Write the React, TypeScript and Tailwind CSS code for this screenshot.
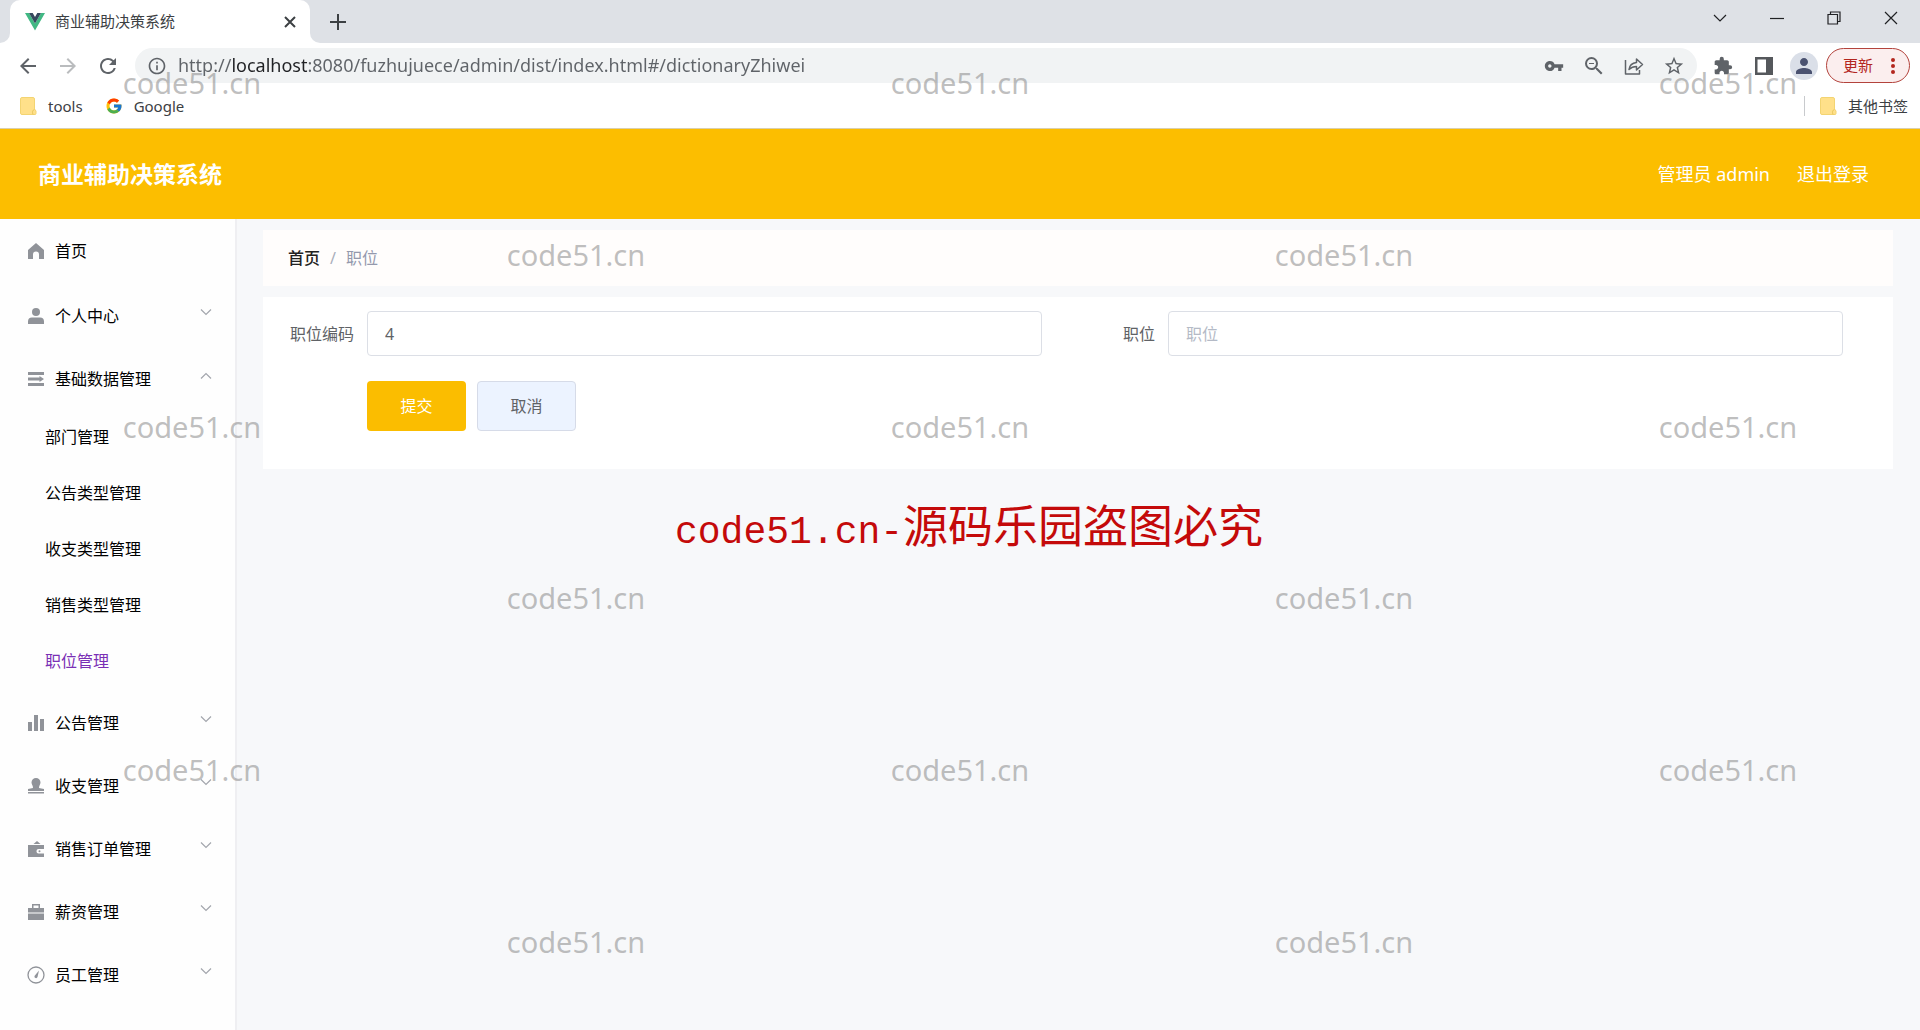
import type { ReactNode } from "react";
import {
  MdArrowBack,
  MdArrowForward,
  MdExtension,
  MdInfoOutline,
  MdPerson,
  MdRefresh,
  MdStarBorder,
  MdVpnKey,
  MdZoomOut,
} from "react-icons/md";
import { FcGoogle } from "react-icons/fc";

/* ---------- drawings ---------- */

function VueLogo() {
  return (
    <svg viewBox="0 0 20 18" className="h-[18px] w-5" aria-hidden="true">
      <path d="M0 0h4l6 10.5L16 0h4L10 17.5z" fill="#41b883" />
      <path d="M4 0h3.7L10 4l2.3-4H16L10 10.5z" fill="#35495e" />
    </svg>
  );
}

function Folder() {
  return (
    <svg viewBox="0 0 17 18" className="h-[18px] w-[17px]" aria-hidden="true">
      <path d="M2 .5h11a1.5 1.5 0 0 1 1.5 1.5v10l1.5 2v2.500a1 1 0 0 1-1 1H2A1.500 1.500 0 0 1 .5 16V2A1.500 1.500 0 0 1 2 .5z" fill="#ffe08a" stroke="#f3d472" />
      <path d="M14.500 12.500c-2 .5-2.500 2.500-1.500 5" fill="none" stroke="#e9c65c" />
    </svg>
  );
}

function ShareIcon() {
  return (
    <svg viewBox="0 0 20 20" className="size-5" fill="none" stroke="#5f6368" strokeWidth="1.500" strokeLinejoin="round" aria-hidden="true">
      <path d="M1.500 4v14h14v-4" />
      <path d="M5 13.500C5.500 9.500 8 7 12.500 6.500V3l6 5.500-6 5.500v-3.500c-3.500 0-5.500 1-7.500 3z" />
    </svg>
  );
}

function SidePanelIcon() {
  return (
    <svg viewBox="0 0 18 18" className="size-[18px]" aria-hidden="true">
      <path fill="#55585c" fillRule="evenodd" d="M0 0h18v18H0zM2.500 2.500v13H11v-13z" />
    </svg>
  );
}

function Chevron({ up = false }: { up?: boolean }) {
  return (
    <svg viewBox="0 0 14 14" className="size-3.5" fill="none" stroke="#a3a6ad" strokeWidth="1.200" aria-hidden="true">
      <path d={up ? "M2 10.500 7 5.500l5 5" : "M2 4.500l5 5 5-5"} />
    </svg>
  );
}

const icons: Record<string, ReactNode> = {
  home: <path d="M9 1 17 8v9h-5v-4.500a2.500 2.500 0 0 0-6 0V17H1V8z" />,
  user: (
    <>
      <circle cx="9" cy="5" r="4" />
      <path d="M1 17v-2.500a4 4 0 0 1 4-4h8a4 4 0 0 1 4 4V17z" />
    </>
  ),
  unfold: <path d="M1 2h16v3H1zM1 13h16v3H1zM1 7.500h11.500V6l4.500 3-4.500 3v-1.500H1z" />,
  data: <path d="M1 8h4v9H1zM7 1h4v16H7zM13 5h4v12h-4z" />,
  check: (
    <>
      <path d="M9 1a4.500 4.500 0 0 1 4.500 4.500c0 2-1.500 3-1.500 5.500l5 1v2H1v-2l5-1c0-2.500-1.500-3.500-1.500-5.500A4.500 4.500 0 0 1 9 1z" />
      <path d="M1 15h16v1.500H1z" />
    </>
  ),
  wallet: (
    <>
      <path d="M6.500 4 10 1l3.500 3z" />
      <path fillRule="evenodd" d="M1 5h16v4h-5.500a2 2 0 0 0-2 2v.5a2 2 0 0 0 2 2H17V17H1z" />
      <circle cx="12.500" cy="11.250" r="1" />
    </>
  ),
  briefcase: (
    <path fillRule="evenodd" d="M5 1h8v4h4v4.500H1V5h4zM6.500 2.500V5h5V2.500zM1 10.500h16V17H1z" />
  ),
  odometer: (
    <>
      <circle cx="9" cy="9" r="8" fill="none" stroke="currentColor" strokeWidth="1.300" />
      <path d="M12 4.500 10.500 11a1.500 1.500 0 1 1-3-1z" />
    </>
  ),
};

function MenuIcon({ name }: { name: string }) {
  return (
    <svg viewBox="0 0 18 18" className="size-[18px] shrink-0 text-[#909399]" fill="currentColor" aria-hidden="true">
      {icons[name]}
    </svg>
  );
}

/* ---------- browser window ---------- */

function BrowserChrome() {
  return (
    <div className="border-b border-[#d9cfae] bg-white text-[#3c4043]">
      <div className="flex h-[43px] items-end bg-[#dee1e6]">
        <div className="size-2.5 bg-white">
          <div className="size-2.5 rounded-br-[10px] bg-[#dee1e6]" />
        </div>
        <div className="flex h-[43px] w-[300px] items-center rounded-t-[10px] bg-white pr-2.5 pl-[15px]">
          <VueLogo />
          <span className="ml-[10px] grow text-[15px]">商业辅助决策系统</span>
          <button aria-label="关闭标签页" className="flex size-5 items-center justify-center">
            <svg viewBox="0 0 12 12" className="size-3" stroke="#3c4043" strokeWidth="2" aria-hidden="true">
              <path d="M1 1l10 10M11 1 1 11" />
            </svg>
          </button>
        </div>
        <div className="size-2.5 bg-white">
          <div className="size-2.5 rounded-bl-[10px] bg-[#dee1e6]" />
        </div>
        <button aria-label="新建标签页" className="ml-1.5 flex h-[43px] w-6 items-center justify-center">
          <svg viewBox="0 0 16 16" className="size-4" stroke="#3c4043" strokeWidth="2" aria-hidden="true">
            <path d="M8 0v16M0 8h16" />
          </svg>
        </button>
        <div className="ml-auto flex self-start pr-px text-[#202124]">
          {[
            ["搜索标签页", "M1 4l6 6 6-6"],
            ["最小化", "M0 7.500h14"],
            ["还原", "M1 3.500h9.500V13H1zM3.500 3V1h9.500v9.500h-2"],
            ["关闭", "M1 1l12 12M13 1 1 13"],
          ].map(([label, d]) => (
            <button key={label} aria-label={label} className="flex h-9 w-[57px] items-center justify-center">
              <svg viewBox="0 0 14 14" className="size-3.5" fill="none" stroke="currentColor" strokeWidth="1.200" aria-hidden="true">
                <path d={d} />
              </svg>
            </button>
          ))}
        </div>
      </div>

      <div className="flex h-[45px] items-center pr-2.5 pl-4 text-[#5f6368]">
        <button aria-label="后退" className="size-6"><MdArrowBack className="size-6" /></button>
        <button aria-label="前进" className="ml-4 size-6 text-[#babcbe]"><MdArrowForward className="size-6" /></button>
        <button aria-label="重新加载" className="ml-4 size-6"><MdRefresh className="size-6" /></button>
        <div className="ml-[15px] flex h-[35px] grow items-center rounded-full bg-[#f1f3f4] pr-[11px] pl-3">
          <MdInfoOutline className="size-5" />
          <input
            aria-label="地址栏"
            defaultValue="http://localhost:8080/fuzhujuece/admin/dist/index.html#/dictionaryZhiwei"
            className="ml-[11px] h-8 grow bg-[linear-gradient(90deg,#5f6368_0_54px,#202124_54px_129px,#5f6368_129px)] bg-clip-text pb-0.5 text-[18px] text-transparent outline-none"
          />
          <div className="flex gap-4">
            <button aria-label="密码" className="flex size-6 items-center justify-center"><MdVpnKey className="size-5" /></button>
            <button aria-label="缩放" className="size-6"><MdZoomOut className="size-6" /></button>
            <button aria-label="分享" className="flex size-6 items-center justify-center"><ShareIcon /></button>
            <button aria-label="添加书签" className="flex size-6 items-center justify-center"><MdStarBorder className="size-[22px]" /></button>
          </div>
        </div>
        <button aria-label="扩展程序" className="ml-4"><MdExtension className="size-5" /></button>
        <button aria-label="侧边栏" className="ml-[22px]"><SidePanelIcon /></button>
        <button aria-label="用户" className="ml-[17px] flex size-7 items-center justify-center rounded-full bg-[#dadfe8] text-[#4a5270]">
          <MdPerson className="size-6" />
        </button>
        <button className="ml-2 flex h-[35px] w-[84px] items-center justify-between rounded-full border border-[#b3433c] bg-[#fbeeee] pr-3.5 pl-4 text-[15px] text-[#b3261e]">
          更新
          <svg viewBox="0 0 4 18" className="h-[18px] w-1" fill="currentColor" aria-hidden="true">
            <circle cx="2" cy="3" r="2" />
            <circle cx="2" cy="9" r="2" />
            <circle cx="2" cy="15" r="2" />
          </svg>
        </button>
      </div>

      <div className="flex h-10 items-center pr-3 pb-3 pl-5 pt-2 text-[15px]">
        <a href="#tools" className="flex items-center gap-[11px]"><Folder />tools</a>
        <a href="#google" className="ml-[22px] flex items-center gap-[11px]"><FcGoogle className="size-[18px]" />Google</a>
        <a href="#other" className="ml-auto flex items-center gap-[11px]">
          <span className="mr-1 h-5 w-px bg-[#c8cacd]" />
          <Folder />
          其他书签
        </a>
      </div>
    </div>
  );
}

/* ---------- application ---------- */

const menu = [
  { label: "个人中心", icon: "user" },
  {
    label: "基础数据管理",
    icon: "unfold",
    children: ["部门管理", "公告类型管理", "收支类型管理", "销售类型管理", "职位管理"],
  },
  { label: "公告管理", icon: "data" },
  { label: "收支管理", icon: "check" },
  { label: "销售订单管理", icon: "wallet" },
  { label: "薪资管理", icon: "briefcase" },
  { label: "员工管理", icon: "odometer" },
];

function Sidebar() {
  return (
    <nav className="w-[237px] shrink-0 border-r-2 border-[#efeff2] bg-[#fefefe] pt-0.5 text-[16px] text-black">
      <a href="#home" className="mb-[5px] flex h-[60px] items-center gap-[10px] pl-[27px]">
        <MenuIcon name="home" />
        首页
      </a>
      {menu.map((item) => (
        <div key={item.label}>
          <button className="mb-[3px] flex h-[60px] w-full items-center gap-[10px] pr-[22px] pl-[27px] text-left has-[+ul]:mb-0">
            <MenuIcon name={item.icon} />
            <span className="grow">{item.label}</span>
            <span className="pb-2"><Chevron up={Boolean(item.children)} /></span>
          </button>
          {item.children && (
            <ul className="mb-1">
              {item.children.map((child) => (
                <li key={child}>
                  <a
                    href="#sub"
                    className={
                      child === "职位管理"
                        ? "flex h-14 items-center pl-[45px] text-[#7a2fb5]"
                        : "flex h-14 items-center pl-[45px]"
                    }
                  >
                    {child}
                  </a>
                </li>
              ))}
            </ul>
          )}
        </div>
      ))}
    </nav>
  );
}

const inputClass =
  "h-[45px] w-0 grow rounded border border-[#dcdfe6] bg-white px-[17px] text-[16px] text-[#606266] outline-none placeholder:text-[#b4bac6]";

function Content() {
  return (
    <main className="grow bg-[#f7f8fa] pt-[11px] pr-[27px] pl-[26px]">
      <div className="flex h-14 items-center bg-[#fffdfc] px-[25px] text-[16px]">
        <a href="#home" className="font-medium text-[#222]">首页</a>
        <span className="mx-[10px] text-[#a9aebb]">/</span>
        <span className="text-[#9499ad]">职位</span>
      </div>
      <form className="mt-[11px] bg-white pt-[14px] pr-[50px] pb-[38px] pl-[27px]" onSubmit={(e) => e.preventDefault()}>
        <div className="flex items-center text-[16px] text-[#606266]">
          <label htmlFor="code" className="w-[77px]">职位编码</label>
          <input id="code" defaultValue="4" className={inputClass} />
          <label htmlFor="position" className="w-[126px] pr-[13px] text-right">职位</label>
          <input id="position" placeholder="职位" className={inputClass} />
        </div>
        <div className="mt-[25px] flex gap-[11px] pl-[77px] text-[16px]">
          <button type="submit" className="h-[50px] w-[99px] rounded bg-[#fbbd00] text-white">提交</button>
          <button type="button" className="h-[50px] w-[99px] rounded border border-[#d6dbe8] bg-[#ecf3ff] text-[#606266]">取消</button>
        </div>
      </form>
    </main>
  );
}

/* Repeated stamp laid over the whole page on a 5 x 6 checkerboard. */
function Watermark() {
  return (
    <div className="pointer-events-none absolute inset-x-0 -top-[3px] bottom-[3px]">
      <div className="grid h-full grid-cols-5 grid-rows-6">
        {Array.from({ length: 30 }, (_, i) => (
          <div key={i} className="flex items-center justify-center text-[29px] leading-none text-[#808080]/50">
            {i % 2 === 0 ? "code51.cn" : ""}
          </div>
        ))}
      </div>
      <div className="absolute top-[499px] left-[675px] flex items-baseline text-[45px] leading-[60px] whitespace-nowrap text-[#c40a0a]">
        <span className="font-['Liberation_Mono'] text-[38px]">code51.cn-</span>
        源码乐园盗图必究
      </div>
    </div>
  );
}

export default function App() {
  return (
    <div className="relative flex min-h-screen flex-col bg-white font-['Noto_Sans','Noto_Sans_CJK_SC',sans-serif]">
      <BrowserChrome />
      <header className="flex h-[90px] items-center bg-[#fcbe00] pr-[51px] pl-[38px] text-white">
        <h1 className="text-[23px] font-bold">商业辅助决策系统</h1>
        <span className="ml-auto text-[18px]">管理员 admin</span>
        <a href="#logout" className="ml-[27px] text-[18px]">退出登录</a>
      </header>
      <div className="flex grow">
        <Sidebar />
        <Content />
      </div>
      <Watermark />
    </div>
  );
}
